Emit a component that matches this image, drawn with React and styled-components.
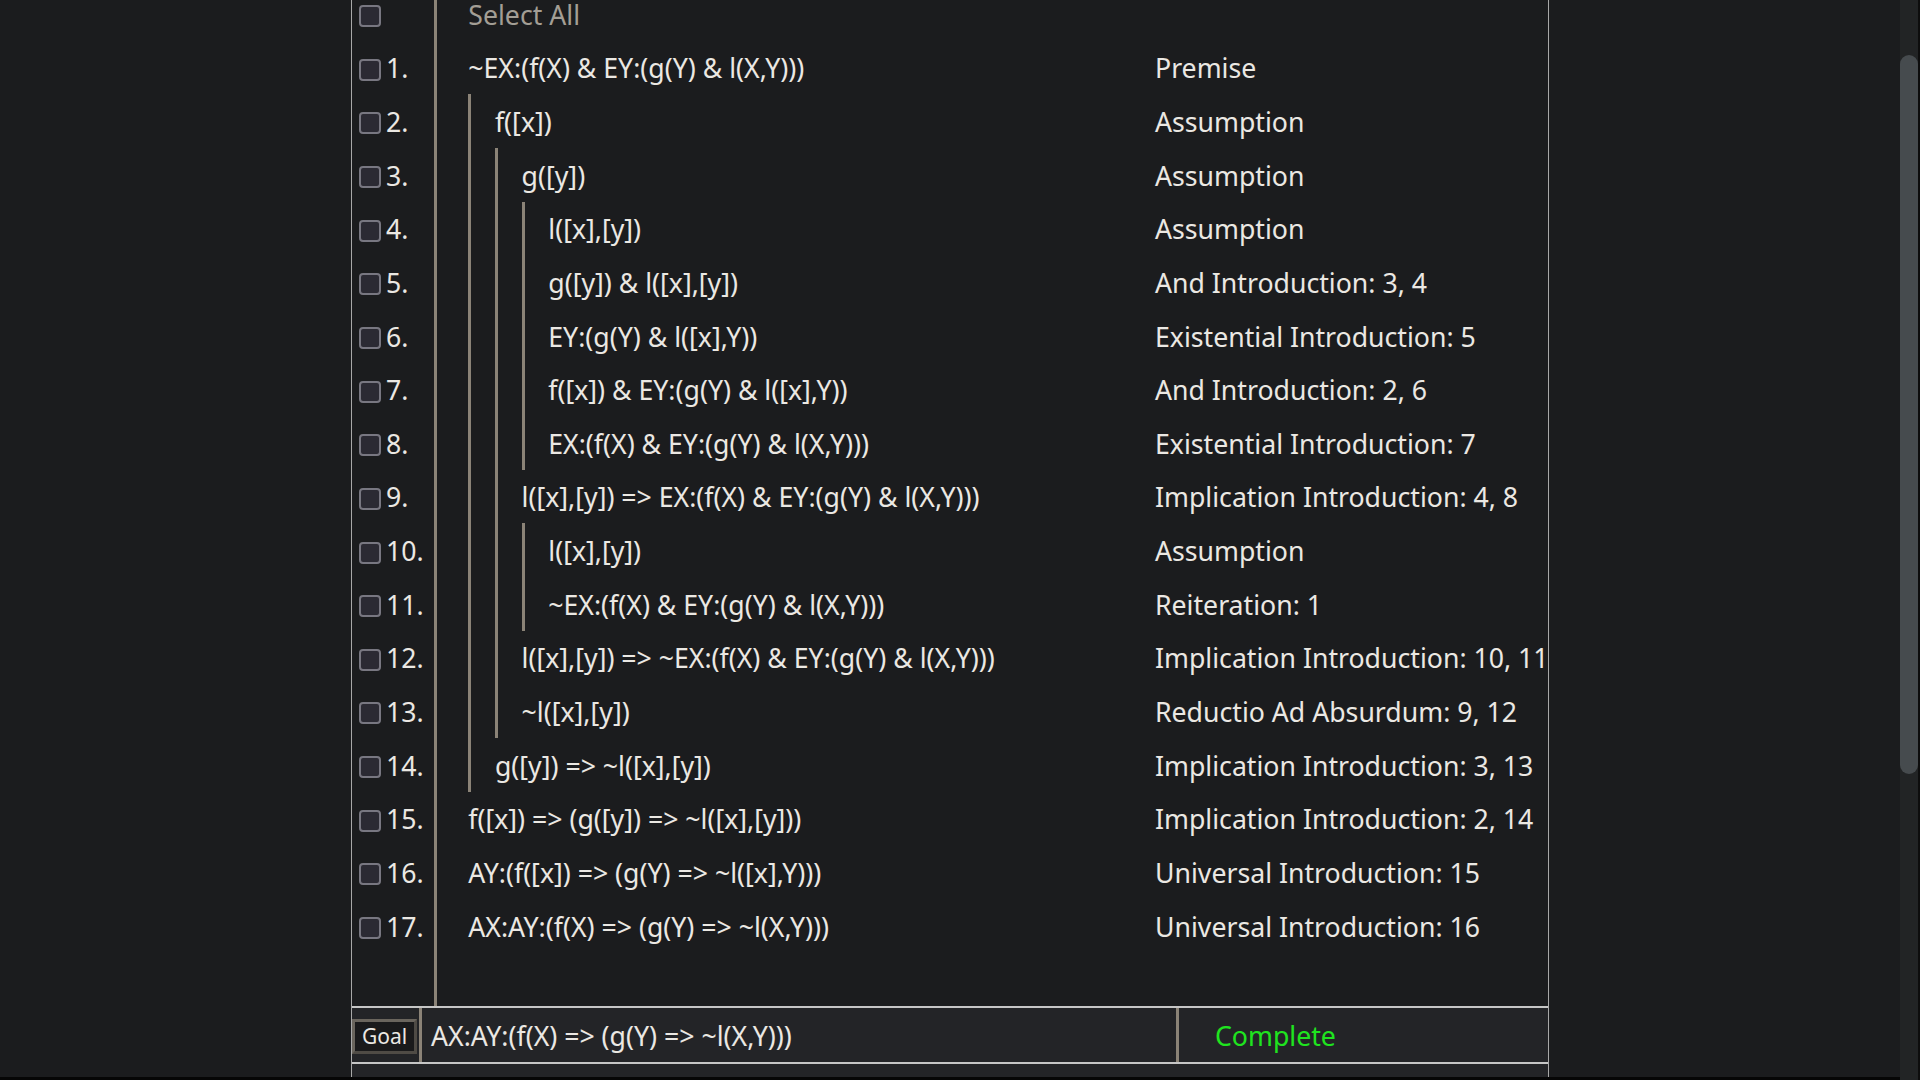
import React, { useLayoutEffect, useRef } from "react";
import styled, { createGlobalStyle } from "styled-components";

const GlobalStyle = createGlobalStyle`
  html, body {
    margin: 0;
    padding: 0;
    overflow: hidden;
    background: #1b1c1e;
  }
  body {
    font-family: "Noto Sans", "Open Sans", sans-serif;
  }
`;

const Frame = styled.div`
  display: flex;
  height: 100vh;
  background: #1b1c1e;
`;

const Viewport = styled.div`
  flex: 1 1 auto;
  min-width: 0;
  overflow: hidden;
`;

const ScrollRail = styled.div`
  flex: 0 0 20px;
  box-sizing: border-box;
  padding-top: 55px;
  background: #222425;
  border-right: 2px solid #0d0d0d;
`;

const ScrollThumb = styled.div`
  height: 719px;
  border-radius: 9px;
  background: #464b4e;
`;

const Panel = styled.main`
  width: 1198px;
  margin: 0 auto;
  box-sizing: border-box;
  border-left: 1px solid #a8a8a8;
  border-right: 1px solid #a8a8a8;
  background: #1b1c1e;
  color: #ebe8e3;
  font-size: 26.67px;
`;

const PanelHeader = styled.header`
  height: 70px;
  display: grid;
  grid-template-columns: 82px 3px 1fr;
`;

const Proof = styled.section`
  display: flex;
  flex-direction: column;
`;

const Row = styled.div`
  display: grid;
  grid-template-columns: 82px 3px 718px 393px;
  height: 53.65px;
`;

const NumCell = styled.div`
  display: flex;
  align-items: center;
  gap: 5px;
  padding: 0.7px 0 0 7px;
  box-sizing: border-box;
  white-space: nowrap;
`;

const Check = styled.span`
  flex: 0 0 auto;
  width: 22px;
  height: 22px;
  box-sizing: border-box;
  margin-top: 4px;
  border: 2px solid #787781;
  border-radius: 4px;
  background: #2b2a33;
`;

const Divider = styled.div`
  background: #8b8377;
`;

const FormulaCell = styled.div`
  display: flex;
  align-items: stretch;
  padding-left: 31.3px;
  min-width: 0;
`;

const Bar = styled.span`
  flex: 0 0 26.67px;
  box-sizing: border-box;
  border-left: 3px solid #8b8377;
`;

const CellText = styled.span`
  display: flex;
  align-items: center;
  padding-top: 0.7px;
  white-space: nowrap;
  color: ${(p) => (p.$muted ? "#a39e95" : "#ebe8e3")};
`;

const RuleCell = styled.div`
  display: flex;
  align-items: center;
  padding-top: 0.7px;
  white-space: nowrap;
`;

const GoalBar = styled.div`
  display: grid;
  grid-template-columns: 67px 3px 754px 3px 1fr;
  height: 58px;
  box-sizing: border-box;
  border-top: 2px solid #c6c6c6;
  border-bottom: 2px solid #c6c6c6;
  background: #232427;
`;

const GoalButton = styled.button`
  align-self: center;
  width: 65px;
  height: 35px;
  margin-top: 2px;
  padding: 0;
  box-sizing: border-box;
  border: 3px solid;
  border-color: #6a655d #4f4b45 #4f4b45 #6a655d;
  background: #1a1a1b;
  color: #ebe8e3;
  font-family: "Noto Sans", "Open Sans", sans-serif;
  font-size: 21px;
  line-height: 1;
`;

const GoalFormula = styled.div`
  display: flex;
  align-items: center;
  padding: 1px 0 0 9px;
  white-space: nowrap;
`;

const Status = styled.div`
  display: flex;
  align-items: center;
  padding: 1px 0 0 36px;
  color: ${(p) => (p.$done ? "#1fe41f" : "#e05050")};
`;

const Strip = styled.div`
  height: 13px;
  background: #232427;
`;

const Footer = styled.footer`
  height: 459px;
  border-top: 3px solid #060606;
  background: #1b1c1e;
`;

const lines = [
  { f: "~EX:(f(X) & EY:(g(Y) & l(X,Y)))", d: 0, r: "Premise" },
  { f: "f([x])", d: 1, r: "Assumption" },
  { f: "g([y])", d: 2, r: "Assumption" },
  { f: "l([x],[y])", d: 3, r: "Assumption" },
  { f: "g([y]) & l([x],[y])", d: 3, r: "And Introduction: 3, 4" },
  { f: "EY:(g(Y) & l([x],Y))", d: 3, r: "Existential Introduction: 5" },
  { f: "f([x]) & EY:(g(Y) & l([x],Y))", d: 3, r: "And Introduction: 2, 6" },
  { f: "EX:(f(X) & EY:(g(Y) & l(X,Y)))", d: 3, r: "Existential Introduction: 7" },
  { f: "l([x],[y]) => EX:(f(X) & EY:(g(Y) & l(X,Y)))", d: 2, r: "Implication Introduction: 4, 8" },
  { f: "l([x],[y])", d: 3, r: "Assumption" },
  { f: "~EX:(f(X) & EY:(g(Y) & l(X,Y)))", d: 3, r: "Reiteration: 1" },
  { f: "l([x],[y]) => ~EX:(f(X) & EY:(g(Y) & l(X,Y)))", d: 2, r: "Implication Introduction: 10, 11" },
  { f: "~l([x],[y])", d: 2, r: "Reductio Ad Absurdum: 9, 12" },
  { f: "g([y]) => ~l([x],[y])", d: 1, r: "Implication Introduction: 3, 13" },
  { f: "f([x]) => (g([y]) => ~l([x],[y]))", d: 0, r: "Implication Introduction: 2, 14" },
  { f: "AY:(f([x]) => (g(Y) => ~l([x],Y)))", d: 0, r: "Universal Introduction: 15" },
  { f: "AX:AY:(f(X) => (g(Y) => ~l(X,Y)))", d: 0, r: "Universal Introduction: 16" },
];

function ProofLine({ index, line }) {
  return (
    <Row>
      <NumCell>
        <Check role="checkbox" aria-checked="false" />
        {index}.
      </NumCell>
      <Divider />
      <FormulaCell>
        {Array.from({ length: line.d }, (_, i) => (
          <Bar key={i} />
        ))}
        <CellText>{line.f}</CellText>
      </FormulaCell>
      <RuleCell>{line.r}</RuleCell>
    </Row>
  );
}

export default function App() {
  const ref = useRef(null);
  useLayoutEffect(() => {
    if (ref.current) ref.current.scrollTop = 83;
  }, []);

  return (
    <>
      <GlobalStyle />
      <Frame>
        <Viewport ref={ref}>
          <Panel>
            <PanelHeader>
              <div />
              <Divider />
              <div />
            </PanelHeader>
            <Proof>
              <Row>
                <NumCell>
                  <Check role="checkbox" aria-checked="false" />
                </NumCell>
                <Divider />
                <FormulaCell>
                  <CellText $muted>Select All</CellText>
                </FormulaCell>
                <RuleCell />
              </Row>
              {lines.map((line, i) => (
                <ProofLine key={i} index={i + 1} line={line} />
              ))}
              <Row>
                <NumCell />
                <Divider />
                <FormulaCell />
                <RuleCell />
              </Row>
            </Proof>
            <GoalBar>
              <GoalButton>Goal</GoalButton>
              <Divider />
              <GoalFormula>AX:AY:(f(X) =&gt; (g(Y) =&gt; ~l(X,Y)))</GoalFormula>
              <Divider />
              <Status $done>Complete</Status>
            </GoalBar>
            <Strip />
          </Panel>
          <Footer />
        </Viewport>
        <ScrollRail aria-hidden="true">
          <ScrollThumb />
        </ScrollRail>
      </Frame>
    </>
  );
}
